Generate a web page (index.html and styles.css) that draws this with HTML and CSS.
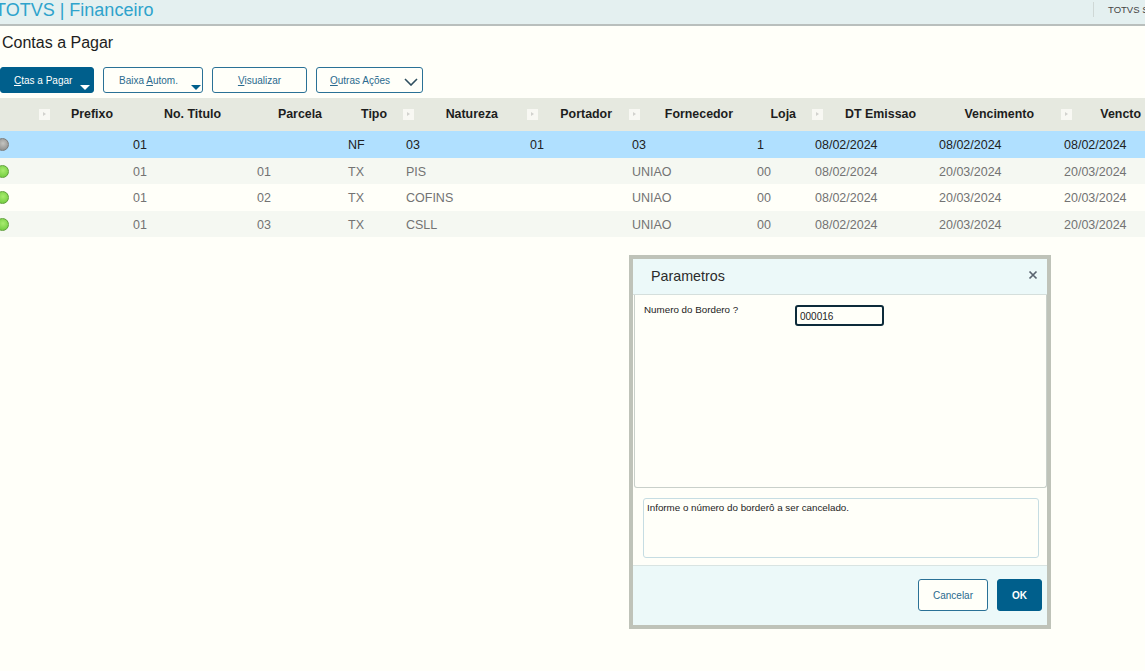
FILE: index.html
```html
<!DOCTYPE html>
<html lang="pt-BR">
<head>
    <meta charset="UTF-8">
    <title>TOTVS | Financeiro</title>
    <link rel="stylesheet" href="styles.css">
</head>
<body>

    <header class="topbar">
        <div class="app-title">TOTVS | Financeiro</div>
        <div class="company">TOTVS S.A.</div>
    </header>

    <h1 class="page-title">Contas a Pagar</h1>

    <div class="toolbar">
        <button class="btn btn-primary btn-menu btn-ctas"><span><u>C</u>tas a Pagar</span><i class="caret caret-white"></i></button>
        <button class="btn btn-menu btn-baixa"><span>Baixa <u>A</u>utom.</span><i class="caret"></i></button>
        <button class="btn btn-visualizar"><span><u>V</u>isualizar</span></button>
        <button class="btn btn-outras"><span><u>O</u>utras Ações</span>
            <svg class="chevron" width="14" height="8" viewBox="0 0 14 8"><path d="M1 1l6 6 6-6" fill="none" stroke="#2f4f5f" stroke-width="1.6"/></svg>
        </button>
    </div>

    <div class="grid">
        <div class="row row-head">
            <div class="th"><i class="sort sort-first"></i>Prefixo</div>
            <div class="th">No. Titulo</div>
            <div class="th">Parcela</div>
            <div class="th">Tipo</div>
            <div class="th"><i class="sort"></i>Natureza</div>
            <div class="th"><i class="sort"></i>Portador</div>
            <div class="th"><i class="sort"></i>Fornecedor</div>
            <div class="th">Loja</div>
            <div class="th"><i class="sort"></i>DT Emissao</div>
            <div class="th">Vencimento</div>
            <div class="th"><i class="sort"></i>Vencto</div>
        </div>
        <div class="row row-selected">
            <div class="td"><i class="dot dot-grey"></i></div>
            <div class="td">01</div>
            <div class="td"></div>
            <div class="td">NF</div>
            <div class="td">03</div>
            <div class="td">01</div>
            <div class="td">03</div>
            <div class="td">1</div>
            <div class="td">08/02/2024</div>
            <div class="td">08/02/2024</div>
            <div class="td">08/02/2024</div>
        </div>
        <div class="row row-alt">
            <div class="td"><i class="dot"></i></div>
            <div class="td">01</div>
            <div class="td">01</div>
            <div class="td">TX</div>
            <div class="td">PIS</div>
            <div class="td"></div>
            <div class="td">UNIAO</div>
            <div class="td">00</div>
            <div class="td">08/02/2024</div>
            <div class="td">20/03/2024</div>
            <div class="td">20/03/2024</div>
        </div>
        <div class="row">
            <div class="td"><i class="dot"></i></div>
            <div class="td">01</div>
            <div class="td">02</div>
            <div class="td">TX</div>
            <div class="td">COFINS</div>
            <div class="td"></div>
            <div class="td">UNIAO</div>
            <div class="td">00</div>
            <div class="td">08/02/2024</div>
            <div class="td">20/03/2024</div>
            <div class="td">20/03/2024</div>
        </div>
        <div class="row row-alt">
            <div class="td"><i class="dot"></i></div>
            <div class="td">01</div>
            <div class="td">03</div>
            <div class="td">TX</div>
            <div class="td">CSLL</div>
            <div class="td"></div>
            <div class="td">UNIAO</div>
            <div class="td">00</div>
            <div class="td">08/02/2024</div>
            <div class="td">20/03/2024</div>
            <div class="td">20/03/2024</div>
        </div>
    </div>

    <!-- Parametros dialog -->
    <div class="dialog">
        <div class="dialog-head">
            <span class="dialog-title">Parametros</span>
            <svg class="dialog-close" width="10" height="10" viewBox="0 0 10 10"><path d="M1.5 1.5l7 7M8.5 1.5l-7 7" stroke="#5a6470" stroke-width="1.7"/></svg>
        </div>
        <div class="dialog-body">
            <label class="field-label">Numero do Bordero ?</label>
            <div class="field-input">000016</div>
        </div>
        <div class="dialog-help">
            <div class="help-box">Informe o número do borderô a ser cancelado.</div>
        </div>
        <div class="dialog-foot">
            <button class="btn btn-cancel"><span>Cancelar</span></button>
            <button class="btn btn-primary btn-ok"><span>OK</span></button>
        </div>
    </div>

</body>
</html>
```

FILE: styles.css
```css
* {
    box-sizing: border-box;
}
html, body {
    height: 100%;
}
body {
    position: relative;
    margin: 0;
    overflow: hidden;
    font-family: "Liberation Sans", Arial, sans-serif;
    background-color: #fffff9;
    color: #1d1d1d;
}

/* top bar */
.topbar {
    display: flex;
    justify-content: space-between;
    align-items: center;
    height: 26px;
    background-color: #e4f0f0;
    border-bottom: 2px solid #b9bfbd;
    white-space: nowrap;
}
.app-title {
    margin-left: -5px;
    margin-top: -4px;
    font-size: 18px;
    color: #2ea3cc;
}
.company {
    width: 52px;
    height: 15px;
    margin-top: -5px;
    padding-left: 14px;
    overflow: hidden;
    font-size: 9.5px;
    line-height: 15px;
    color: #444;
    border-left: 1px solid #cfd8d6;
}

.page-title {
    margin: 8px 0 0 2px;
    height: 18px;
    font-size: 16px;
    font-weight: normal;
    line-height: 18px;
}

/* toolbar */
.toolbar {
    display: flex;
    align-items: center;
    gap: 9px;
    margin-top: 15px;
    height: 26px;
}
.btn {
    display: flex;
    align-items: center;
    justify-content: center;
    position: relative;
    height: 26px;
    padding: 0;
    font-family: inherit;
    font-size: 10px;
    color: #2a6a8e;
    background-color: #fffff9;
    border: 1px solid #2a7196;
    border-radius: 3px;
}
.btn-primary {
    color: #fff;
    background-color: #005f8c;
    border-color: #005f8c;
}
.btn-menu {
    justify-content: flex-start;
}
.btn-ctas {
    width: 94px;
    padding-left: 13px;
}
.btn-baixa {
    width: 100px;
    padding-left: 15px;
}
.btn-visualizar {
    width: 95px;
}
.btn-outras {
    width: 107px;
    justify-content: flex-start;
    padding-left: 13px;
}
.chevron {
    position: absolute;
    right: 4px;
    top: 10px;
}
.caret {
    position: absolute;
    right: 1px;
    bottom: 2px;
    width: 0;
    height: 0;
    border-left: 5px solid transparent;
    border-right: 5px solid transparent;
    border-top: 5px solid #005f8c;
}
.caret-white {
    right: 3px;
    border-top-color: #fff;
}

/* grid */
.grid {
    margin-top: 5px;
    width: 1180px;
}
.row {
    display: grid;
    grid-template-columns: 125px 124px 91px 58px 124px 102px 125px 58px 124px 125px 124px;
    height: 26.5px;
    font-size: 12.5px;
    line-height: 28.5px;
    color: #737373;
}
.row-head {
    height: 33px;
    font-size: 12.4px;
    line-height: 33px;
    font-weight: bold;
    color: #1d1d1d;
    background-color: #e6e9e0;
}
.row-selected {
    color: #222;
    background-color: #b0e0ff;
}
.row-alt {
    background-color: #f5f8f2;
}
.td {
    position: relative;
    padding-left: 8px;
}
.th {
    position: relative;
    padding-right: 11px;
    text-align: right;
}
.th:nth-child(1) { padding-right: 12px; }
.th:nth-child(2) { padding-right: 28px; }
.th:nth-child(3) { padding-right: 18px; }
.th:nth-child(5) { padding-right: 24px; }
.th:nth-child(6) { padding-right: 12px; }
.th:nth-child(7) { padding-right: 16px; }
.th:nth-child(9) { padding-right: 15px; }
.th:nth-child(10) { padding-right: 22px; }
.th:nth-child(11) { padding-right: 39px; }

.sort {
    position: absolute;
    left: 5px;
    top: 11px;
    width: 11px;
    height: 11px;
    background-color: #f8f8f3;
}
.sort::after {
    content: "";
    position: absolute;
    left: 4px;
    top: 3px;
    border-left: 3px solid #d2d2ce;
    border-top: 2.5px solid transparent;
    border-bottom: 2.5px solid transparent;
}
.sort-first {
    left: 39px;
}
.dot {
    position: absolute;
    left: -4px;
    top: 7px;
    width: 13px;
    height: 13px;
    border-radius: 50%;
    border: 1px solid #5fa03a;
    background: radial-gradient(circle at 55% 40%, #a8ec6e, #78d045 70%);
}
.dot-grey {
    border-color: #7c7c7a;
    background: radial-gradient(circle at 55% 40%, #c4c4c0, #949491 70%);
}

/* dialog */
.dialog {
    position: absolute;
    left: 629px;
    top: 255px;
    display: flex;
    flex-direction: column;
    width: 422px;
    height: 374px;
    background-color: #fffff9;
    border: 4px solid #bfc3b9;
}
.dialog-head {
    display: flex;
    justify-content: space-between;
    align-items: center;
    height: 36px;
    padding: 0 9px 1px 18px;
    background-color: #ecf9f9;
    border-bottom: 1px solid #d5dfdc;
}
.dialog-title {
    font-size: 14.3px;
    color: #2b2b2b;
}
.dialog-close {
    margin-top: -3px;
}
.dialog-body {
    display: flex;
    flex-shrink: 0;
    height: 193px;
    margin: 0 0 0 1px;
    padding: 10px 9px;
    border: 1px solid #c9d0ca;
    border-top: 0;
    border-radius: 0 0 3px 3px;
}
.field-label {
    width: 151px;
    margin-top: -1px;
    font-size: 9.8px;
    line-height: 12px;
}
.field-input {
    width: 89px;
    height: 21px;
    padding-left: 3px;
    font-size: 10px;
    line-height: 19px;
    border: 2px solid #0d2b3a;
    border-radius: 3px;
}
.dialog-help {
    flex: 1;
    padding: 10px 8px 7px 10px;
    border-bottom: 1px solid #d9e4e2;
}
.help-box {
    height: 60px;
    padding: 3px;
    font-size: 9.8px;
    line-height: 12px;
    border: 1px solid #c6dde3;
    border-radius: 3px;
}
.dialog-foot {
    display: flex;
    justify-content: flex-end;
    gap: 9px;
    height: 59px;
    padding: 13px 5px 0 0;
    background-color: #ecf9f9;
}
.btn-cancel {
    width: 70px;
    height: 32px;
}
.btn-ok {
    width: 45px;
    height: 32px;
    font-weight: bold;
}
```
